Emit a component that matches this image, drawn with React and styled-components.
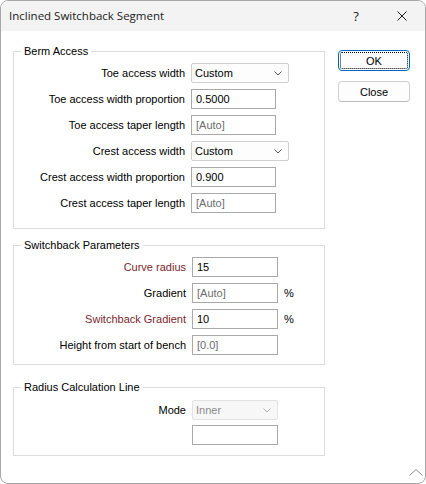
import React from "react";
import styled, { createGlobalStyle } from "styled-components";

const Global = createGlobalStyle`
  html, body { margin: 0; padding: 0; background: #ffffff; }
  body { width: 426px; height: 484px; overflow: hidden; }
  *, *::before, *::after { box-sizing: border-box; }
`;

const Window = styled.div`
  width: 426px;
  height: 484px;
  border: 1px solid #a8a8a8;
  border-radius: 8px;
  overflow: hidden;
  display: flex;
  flex-direction: column;
  background: #ffffff;
  font-family: "Liberation Sans", Arial, sans-serif;
  font-size: 11px;
  color: #000000;
`;

const TitleBar = styled.div`
  height: 30px;
  flex: none;
  display: flex;
  align-items: center;
  background: #f3f3f3;
  padding-left: 8px;
`;

const TitleText = styled.div`
  flex: 1;
  font-family: "Open Sans", "Noto Sans", sans-serif;
  font-size: 11.5px;
  color: #1b1b1b;
  padding-bottom: 1px;
`;

const CaptionButton = styled.div`
  width: 46px;
  height: 30px;
  display: flex;
  align-items: center;
  justify-content: center;
  font-family: "Open Sans", "Noto Sans", sans-serif;
  font-size: 13px;
  color: #1b1b1b;
`;

const Body = styled.div`
  flex: 1;
  display: flex;
  align-items: flex-start;
  gap: 13px;
  padding: 13px 0 0 12px;
`;

const LeftColumn = styled.div`
  width: 312px;
  display: flex;
  flex-direction: column;
`;

const Group = styled.fieldset`
  margin: ${(p) => p.$mt || 0}px 0 0 0;
  border: 1px solid #dcdcdc;
  padding: ${(p) => p.$pt}px 0 ${(p) => p.$pb}px 0;
  min-width: 0;
  display: flex;
  flex-direction: column;
  gap: ${(p) => p.$gap}px;
`;

const Legend = styled.legend`
  margin-left: 7px;
  padding: 0 3px;
  line-height: 14px;
  font-size: 11px;
  color: #000;
`;

const Row = styled.div`
  display: grid;
  grid-template-columns: ${(p) => p.$labelW}px max-content max-content;
  column-gap: 6px;
  align-items: center;
  height: 20px;
`;

const Label = styled.div`
  text-align: right;
  white-space: nowrap;
  color: ${(p) => (p.$required ? "#7d1f2d" : "#000000")};
`;

const TextBox = styled.div`
  width: ${(p) => p.$w}px;
  height: 20px;
  border: 1px solid #a9a9a9;
  background: #ffffff;
  padding-left: 4px;
  display: flex;
  align-items: center;
  color: ${(p) => (p.$muted ? "#6d6d6d" : "#000000")};
  white-space: nowrap;
`;

const Combo = styled.div`
  width: ${(p) => p.$w}px;
  height: 20px;
  border: 1px solid ${(p) => (p.$disabled ? "#e3e3e3" : "#d0d0d0")};
  border-radius: 2px;
  background: ${(p) => (p.$disabled ? "#f7f7f7" : "#fdfdfd")};
  padding: 0 6px 0 3px;
  display: flex;
  align-items: center;
  justify-content: space-between;
  color: ${(p) => (p.$disabled ? "#8a8a8a" : "#000000")};
`;

const Unit = styled.div`
  color: #000;
`;

const RightColumn = styled.div`
  width: 72px;
  margin-top: 6px;
  display: flex;
  flex-direction: column;
  gap: 10px;
`;

const Button = styled.div`
  height: 21px;
  border: 1px solid ${(p) => (p.$default ? "#0067c0" : "#d0d0d0")};
  border-bottom-color: ${(p) => (p.$default ? "#0067c0" : "#bcbcbc")};
  border-radius: 4px;
  background: #fdfdfd;
  padding: 1px;
  display: flex;
  color: #000;
`;

const ButtonFace = styled.div`
  flex: 1;
  display: flex;
  align-items: center;
  justify-content: center;
  border: 1px ${(p) => (p.$focus ? "dotted #000000" : "solid transparent")};
  border-radius: 2px;
`;

const Footer = styled.div`
  flex: none;
  display: flex;
  justify-content: flex-end;
  padding: 0 2px 7px 0;
`;

const Chevron = ({ color = "#555", w = 8, h = 5 }) => (
  <svg width={w} height={h} viewBox={`0 0 ${w} ${h}`}>
    <polyline
      points={`0.5,0.5 ${w / 2},${h - 1} ${w - 0.5},0.5`}
      fill="none"
      stroke={color}
      strokeWidth="1"
    />
  </svg>
);

const CloseIcon = () => (
  <svg width="10" height="10" viewBox="0 0 10 10">
    <path d="M0.5 0.5 L9.5 9.5 M9.5 0.5 L0.5 9.5" stroke="#1b1b1b" strokeWidth="1" fill="none" />
  </svg>
);

const GripIcon = () => (
  <svg width="14" height="7" viewBox="0 0 14 7">
    <polyline points="0.5,6.5 7,0.5 13.5,6.5" fill="none" stroke="#8c8c8c" strokeWidth="1" />
  </svg>
);

const Field = ({ label, required, children, labelW }) => (
  <Row $labelW={labelW}>
    <Label $required={required}>{label}</Label>
    {children}
  </Row>
);

export default function App() {
  return (
    <>
      <Global />
      <Window>
        <TitleBar>
          <TitleText>Inclined Switchback Segment</TitleText>
          <CaptionButton>?</CaptionButton>
          <CaptionButton>
            <CloseIcon />
          </CaptionButton>
        </TitleBar>
        <Body>
          <LeftColumn>
            <Group $pt={5} $pb={15} $gap={6}>
              <Legend>Berm Access</Legend>
              <Field label="Toe access width" labelW={171}>
                <Combo $w={98}>
                  <span>Custom</span>
                  <Chevron />
                </Combo>
              </Field>
              <Field label="Toe access width proportion" labelW={171}>
                <TextBox $w={85}>0.5000</TextBox>
              </Field>
              <Field label="Toe access taper length" labelW={171}>
                <TextBox $w={85} $muted>[Auto]</TextBox>
              </Field>
              <Field label="Crest access width" labelW={171}>
                <Combo $w={98}>
                  <span>Custom</span>
                  <Chevron />
                </Combo>
              </Field>
              <Field label="Crest access width proportion" labelW={171}>
                <TextBox $w={85}>0.900</TextBox>
              </Field>
              <Field label="Crest access taper length" labelW={171}>
                <TextBox $w={85} $muted>[Auto]</TextBox>
              </Field>
            </Group>

            <Group $mt={9} $pt={5} $pb={9} $gap={6}>
              <Legend>Switchback Parameters</Legend>
              <Field label="Curve radius" required labelW={172}>
                <TextBox $w={86}>15</TextBox>
              </Field>
              <Field label="Gradient" labelW={172}>
                <TextBox $w={86} $muted>[Auto]</TextBox>
                <Unit>%</Unit>
              </Field>
              <Field label="Switchback Gradient" required labelW={172}>
                <TextBox $w={86}>10</TextBox>
                <Unit>%</Unit>
              </Field>
              <Field label="Height from start of bench" labelW={172}>
                <TextBox $w={86} $muted>[0.0]</TextBox>
              </Field>
            </Group>

            <Group $mt={15} $pt={6} $pb={10} $gap={5}>
              <Legend>Radius Calculation Line</Legend>
              <Field label="Mode" labelW={172}>
                <Combo $w={86} $disabled>
                  <span>Inner</span>
                  <Chevron color="#b0b0b0" />
                </Combo>
              </Field>
              <Field label="" labelW={172}>
                <TextBox $w={86} />
              </Field>
            </Group>
          </LeftColumn>

          <RightColumn>
            <Button $default>
              <ButtonFace $focus>OK</ButtonFace>
            </Button>
            <Button>
              <ButtonFace>Close</ButtonFace>
            </Button>
          </RightColumn>
        </Body>
        <Footer>
          <GripIcon />
        </Footer>
      </Window>
    </>
  );
}
